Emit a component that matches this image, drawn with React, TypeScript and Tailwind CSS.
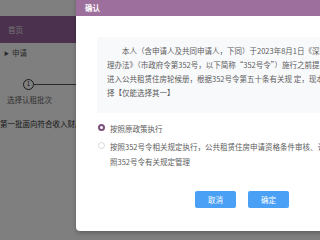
import { useState } from "react";

const POLICY_LINES = [
  "　　本人（含申请人及共同申请人，下同）于2023年8月1日《深圳市公共租赁住房管",
  "理办法》（市政府令第352号，以下简称“352号令”）施行之前提出申请并",
  "进入公共租赁住房轮候册，根据352号令第五十条有关规 定，现本人自愿选",
  "择【仅能选择其一】",
];

const OPTIONS = [
  ["按照原政策执行"],
  [
    "按照352号令相关规定执行，公共租赁住房申请资格条件审核、认租、配租等按",
    "照352号令有关规定管理",
  ],
];

export default function App() {
  const [choice, setChoice] = useState(0);

  return (
    <div className="relative w-[320px] h-[240px] overflow-hidden bg-white font-['Noto_Sans_CJK_SC','Noto_Sans',sans-serif] text-[7.5px] leading-none">
      {/* page behind the dialog */}
      <div className="flex flex-col">
        <div className="h-[16px] bg-white" />
        <div className="h-[27px] w-[90px] bg-[#96639a] flex items-center pl-[8px] text-[#e6e6e6]">
          首页
        </div>
        <div className="pt-[6px] pl-[4px] text-[#555] flex items-center gap-[3px]">
          <span className="text-[5px]">▶</span>
          <span>申请</span>
        </div>
        <div className="mt-[22px] flex items-center pl-[23px]">
          <div className="w-[11px] h-[11px] rounded-full border border-[#333] flex items-center justify-center text-[6px] text-[#333]">
            1
          </div>
          <div className="h-px w-[60px] bg-[#555]" />
        </div>
        <div className="mt-[6px] pl-[7px] text-[#666]">选择认租批次</div>
        <div className="mt-[17px] whitespace-nowrap text-[#333]">
          第一批面向符合收入财产限额标准
        </div>
      </div>

      <div className="absolute inset-0 bg-black/50" />

      {/* dialog */}
      <div className="absolute left-[76px] top-[-4px] w-[300px] h-[235px] rounded-[4px] bg-white shadow-[0_2px_4px_rgba(0,0,0,0.25)] flex flex-col">
        <div className="h-[20px] pt-[4px] bg-[#9d6f9d] rounded-t-[4px] flex items-center pl-[9px] text-white font-bold">
          确认
        </div>
        <div className="pl-[21px] pt-[21px] flex flex-col">
          <div className="bg-[#f8f9fb] pl-[10px] pt-[7px] pb-[13px] text-[#5c5c5c] leading-[14px] whitespace-nowrap overflow-hidden">
            {POLICY_LINES.map((line) => (
              <div key={line}>{line}</div>
            ))}
          </div>

          <div className="mt-[8px] flex flex-col gap-[3px] pl-[1px]">
            {OPTIONS.map((lines, i) => (
              <div
                key={i}
                className="flex items-start gap-[5px] cursor-pointer"
                onClick={() => setChoice(i)}
              >
                <span
                  className={
                    choice === i
                      ? "mt-[3px] w-[7px] h-[7px] rounded-full border-[2px] border-[#7d4f7c] bg-white shrink-0"
                      : "mt-[3px] w-[7px] h-[7px] rounded-full border border-[#d8d8d8] bg-white shrink-0"
                  }
                />
                <div className="flex flex-col text-[#5c5c5c] leading-[15px] whitespace-nowrap">
                  {lines.map((l) => (
                    <div key={l}>{l}</div>
                  ))}
                </div>
              </div>
            ))}
          </div>

          <div className="mt-[22px] flex gap-[12px] pl-[98px]">
            <button className="w-[41px] h-[17px] rounded-[2px] bg-[#4aa0f5] text-white">
              取消
            </button>
            <button className="w-[41px] h-[17px] rounded-[2px] bg-[#4aa0f5] text-white">
              确定
            </button>
          </div>
        </div>
      </div>
    </div>
  );
}
